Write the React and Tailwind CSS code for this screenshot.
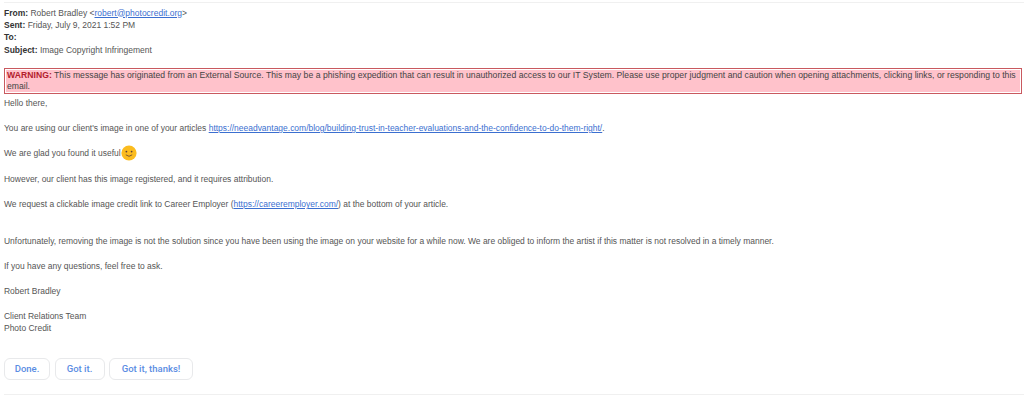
function Line({ children, className = "" }) {
  return <p className={`m-0 whitespace-nowrap text-[8.48px] text-[#555] h-[12.4px] leading-[12.4px] ${className}`}>{children}</p>;
}

function Header({ label, children }) {
  return (
    <p className="m-0 whitespace-nowrap text-[8.5px] h-[12.4px] leading-[12.4px] text-[#555]">
      <b className="text-[#333]">{label}</b> {children}
    </p>
  );
}

function A({ children }) {
  return <span className="text-[#3b6fd0] underline">{children}</span>;
}

function Smile() {
  return (
    <svg width="16" height="16" viewBox="0 0 16 16" className="inline-block align-middle -mt-[2px]">
      <circle cx="8" cy="8" r="7.6" fill="#fbbc1f" />
      <circle cx="5.4" cy="6.6" r="0.9" fill="#5d4037" />
      <circle cx="10.6" cy="6.6" r="0.9" fill="#5d4037" />
      <path d="M4.8 9.8 Q8 12.8 11.2 9.8" stroke="#5d4037" strokeWidth="0.8" fill="none" />
    </svg>
  );
}

function Btn({ children, w }) {
  return (
    <button className={`${w} h-[22px] rounded-[6px] border border-[#e8e9eb] bg-white text-[9.5px] font-medium text-[#5b8de3] flex items-center justify-center font-['Roboto',sans-serif]`}>
      {children}
    </button>
  );
}

export default function App() {
  return (
    <div className="w-[1024px] h-[405px] bg-white overflow-hidden font-['Liberation_Sans',Arial,sans-serif] pl-[4px] pt-[2px]">
      <div className="h-px w-[1020px] bg-[#f0f0f0] mb-[3.5px]" />
      <Header label="From:">Robert Bradley &lt;<A>robert@photocredit.org</A>&gt;</Header>
      <Header label="Sent:">Friday, July 9, 2021 1:52 PM</Header>
      <Header label="To:"></Header>
      <Header label="Subject:">Image Copyright Infringement</Header>

      <div className="mt-[11.6px] w-[1018px] border border-[#c9595f] p-px bg-white">
        <div className="bg-[#ffc2cb] text-[8.65px] leading-[11px] text-[#444] pl-px h-[22px]">
          <p className="m-0 tracking-[0.03px] whitespace-nowrap">
            <b className="text-[#b3202c]">WARNING:</b> This message has originated from an External Source. This may be a phishing expedition that can result in unauthorized access to our IT System. Please use proper judgment and caution when opening attachments, clicking links, or responding to this
          </p>
          <p className="m-0">email.</p>
        </div>
      </div>

      <div className="mt-[3px]">
        <Line>Hello there,</Line>
        <Line className="mt-[13px]">You are using our client's image in one of your articles <A>https://neeadvantage.com/blog/building-trust-in-teacher-evaluations-and-the-confidence-to-do-them-right/</A>.</Line>
        <Line className="mt-[13px]">We are glad you found it useful<Smile /></Line>
        <Line className="mt-[13px]">However, our client has this image registered, and it requires attribution.</Line>
        <Line className="mt-[13px]">We request a clickable image credit link to Career Employer (<A>https://careeremployer.com/</A>) at the bottom of your article.</Line>
        <Line className="mt-[24.6px]">Unfortunately, removing the image is not the solution since you have been using the image on your website for a while now. We are obliged to inform the artist if this matter is not resolved in a timely manner.</Line>
        <Line className="mt-[12.4px]">If you have any questions, feel free to ask.</Line>
        <Line className="mt-[12.6px]">Robert Bradley</Line>
        <Line className="mt-[12.6px]">Client Relations Team</Line>
        <Line>Photo Credit</Line>
      </div>

      <div className="mt-[23.4px] flex gap-[4.5px]">
        <Btn w="w-[46px]">Done.</Btn>
        <Btn w="w-[50px]">Got it.</Btn>
        <Btn w="w-[84px]">Got it, thanks!</Btn>
      </div>
      <div className="mt-[14px] h-px w-[1020px] bg-[#f0f0f0]" />
    </div>
  );
}
